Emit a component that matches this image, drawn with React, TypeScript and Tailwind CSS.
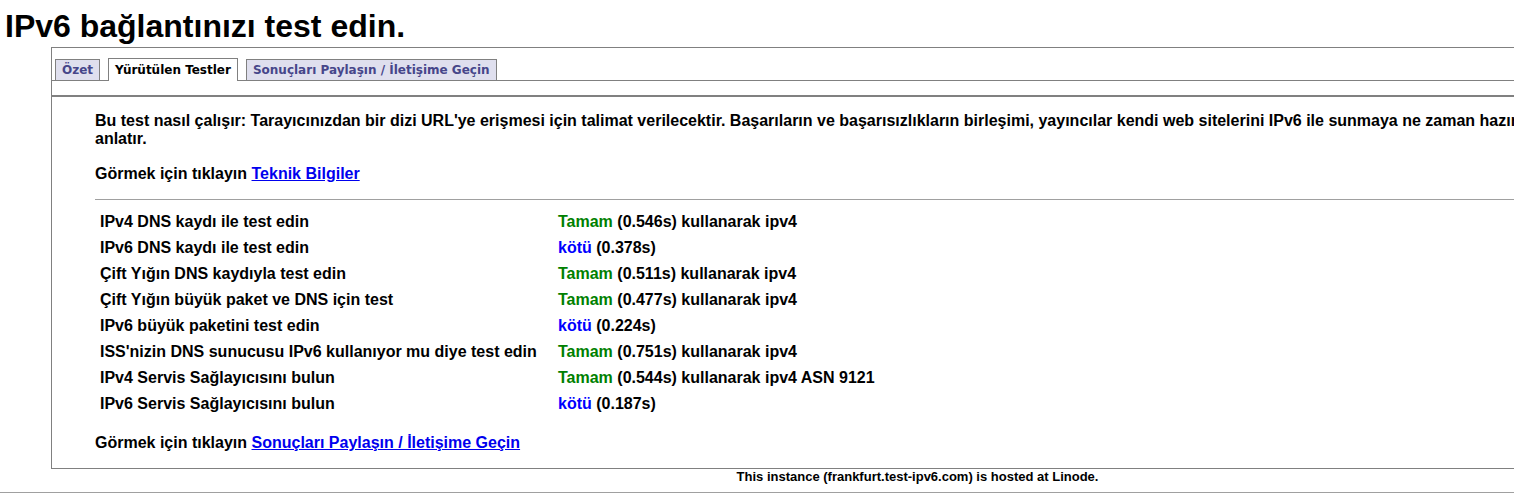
import React from "react";

type Row = [string, "ok" | "bad", string];

const rows: Row[] = [
  ["IPv4 DNS kaydı ile test edin", "ok", "(0.546s) kullanarak ipv4"],
  ["IPv6 DNS kaydı ile test edin", "bad", "(0.378s)"],
  ["Çift Yığın DNS kaydıyla test edin", "ok", "(0.511s) kullanarak ipv4"],
  ["Çift Yığın büyük paket ve DNS için test", "ok", "(0.477s) kullanarak ipv4"],
  ["IPv6 büyük paketini test edin", "bad", "(0.224s)"],
  ["ISS'nizin DNS sunucusu IPv6 kullanıyor mu diye test edin", "ok", "(0.751s) kullanarak ipv4"],
  ["IPv4 Servis Sağlayıcısını bulun", "ok", "(0.544s) kullanarak ipv4 ASN 9121"],
  ["IPv6 Servis Sağlayıcısını bulun", "bad", "(0.187s)"],
];

export default function App() {
  return (
    <div className="w-[1514px] h-[498px] overflow-hidden bg-white text-black font-['Liberation_Sans',Arial,sans-serif]">
      <div className="w-[1835px]">
        <h1 className="pt-[8px] pl-[5px] text-[32px] leading-[37px] font-bold">
          IPv6 bağlantınızı test edin.
        </h1>

        <div className="mt-[2px] ml-[51px] mr-[51px] border border-[#808080]">
          {/* tab bar */}
          <div className="flex items-end gap-[8px] pl-[3px] pt-[11px] border-b border-[#808080] font-['DejaVu_Sans',Verdana,sans-serif] text-[12px] leading-[14px] font-bold">
            <div className="h-[21px] px-[6px] pt-[3px] border-t border-l border-r border-[#808080] bg-[#dfdfee] text-[#46468a] whitespace-nowrap">
              Özet
            </div>
            <div className="h-[23px] -mt-[1px] -mb-[1px] px-[6px] pt-[4px] border-t border-l border-r border-[#808080] bg-white text-black whitespace-nowrap">
              Yürütülen Testler
            </div>
            <div className="h-[21px] px-[6px] pt-[3px] border-t border-l border-r border-[#808080] bg-[#dfdfee] text-[#46468a] whitespace-nowrap">
              Sonuçları Paylaşın / İletişime Geçin
            </div>
          </div>

          <div className="h-[14px]" />
          <div className="border-t-2 border-[#808080]" />

          {/* content */}
          <div className="pl-[43px] pt-[15px] pb-[15px] text-[16px] leading-[18.4px] font-bold">
            <p className="whitespace-nowrap">
              Bu test nasıl çalışır: Tarayıcınızdan bir dizi URL'ye erişmesi için talimat verilecektir. Başarıların ve başarısızlıkların birleşimi, yayıncılar kendi web sitelerini IPv6 ile sunmaya ne zaman hazır olduklarını
              <br />
              anlatır.
            </p>
            <p className="mt-[16px]">
              Görmek için tıklayın{" "}
              <a href="#" className="text-[#0000ee] underline">
                Teknik Bilgiler
              </a>
            </p>
            <div className="mt-[16px] h-px bg-[#a0a0a0]" />
            <div className="mt-[9px] flex flex-col">
              {rows.map(([name, status, rest]) => (
                <div key={name} className="h-[26px] grid grid-cols-[463px_1fr] items-center">
                  <div className="pl-[5px] whitespace-nowrap">{name}</div>
                  <div className="whitespace-nowrap">
                    {status === "ok" ? (
                      <span className="text-[#008000]">Tamam</span>
                    ) : (
                      <span className="text-[#0000ff]">kötü</span>
                    )}{" "}
                    {rest}
                  </div>
                </div>
              ))}
            </div>
            <p className="mt-[17px]">
              Görmek için tıklayın{" "}
              <a href="#" className="text-[#0000ee] underline">
                Sonuçları Paylaşın / İletişime Geçin
              </a>
            </p>
          </div>
        </div>

        <div className="text-center text-[13px] leading-[15px] font-bold">
          This instance (frankfurt.test-ipv6.com) is hosted at Linode.
        </div>
        <div className="mt-[8px] h-px bg-[#a0a0a0]" />
      </div>
    </div>
  );
}
